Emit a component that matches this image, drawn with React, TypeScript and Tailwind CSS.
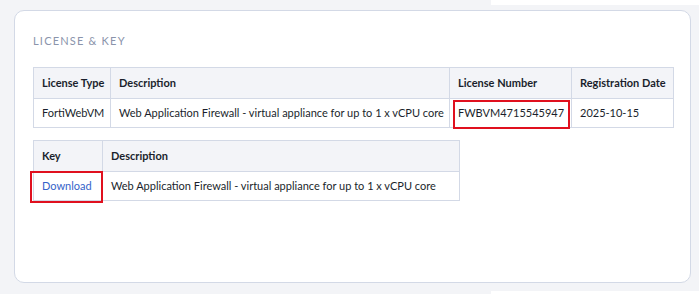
import React from "react";

const font = { fontFamily: "Lato, 'Noto Sans', sans-serif" };

export default function App() {
  return (
    <div className="w-[699px] h-[294px] bg-[#f3f4f7] flex flex-col overflow-hidden" style={font}>
      <div className="flex h-[5px] shrink-0">
        <div className="w-[491px] bg-[#f3f4f7]" />
        <div className="flex-1 bg-white" />
      </div>
      <div className="flex-1 pl-[14px] pr-[8px] pt-[5px] pb-[8px]">
        <div className="h-[273px] rounded-[10px] border border-[#d3d9e6] bg-white px-[18px] pt-[22px]">
          <div className="text-[11px] leading-[16px] tracking-[1.2px] text-[#8a94ab]">LICENSE &amp; KEY</div>
          <table className="mt-[18px] table-fixed w-[640px] border-collapse whitespace-nowrap text-[11px] text-[#1a1f2c]">
            <colgroup>
              <col className="w-[77px]" />
              <col className="w-[339px]" />
              <col className="w-[122px]" />
              <col className="w-[102px]" />
            </colgroup>
            <thead>
              <tr className="bg-[#f3f4f8]">
                <th className="h-[31px] border border-[#d3d9e6] px-[8px] text-left font-bold">License Type</th>
                <th className="h-[31px] border border-[#d3d9e6] px-[8px] text-left font-bold">Description</th>
                <th className="h-[31px] border border-[#d3d9e6] px-[8px] text-left font-bold">License Number</th>
                <th className="h-[31px] border border-[#d3d9e6] px-[8px] text-left font-bold">Registration Date</th>
              </tr>
            </thead>
            <tbody>
              <tr>
                <td className="h-[29px] border border-[#d3d9e6] px-[8px]">FortiWebVM</td>
                <td className="h-[29px] border border-[#d3d9e6] px-[8px]">Web Application Firewall - virtual appliance for up to 1 x vCPU core</td>
                <td className="relative h-[29px] border border-[#d3d9e6] px-[8px]">
                  FWBVM4715545947
                  <span className="absolute left-[3px] right-[1px] top-[1px] bottom-[-2px] border-2 border-[#e0101e]" />
                </td>
                <td className="h-[29px] border border-[#d3d9e6] px-[8px]">2025-10-15</td>
              </tr>
            </tbody>
          </table>
          <table className="mt-[12px] table-fixed w-[426px] border-collapse whitespace-nowrap text-[11px] text-[#1a1f2c]">
            <colgroup>
              <col className="w-[69px]" />
              <col className="w-[357px]" />
            </colgroup>
            <thead>
              <tr className="bg-[#f3f4f8]">
                <th className="h-[31px] border border-[#d3d9e6] px-[8px] text-left font-bold">Key</th>
                <th className="h-[31px] border border-[#d3d9e6] px-[8px] text-left font-bold">Description</th>
              </tr>
            </thead>
            <tbody>
              <tr>
                <td className="relative h-[29px] border border-[#d3d9e6] px-[8px] text-[#3563c9]">
                  Download
                  <span className="absolute left-[-4px] right-[-1px] top-[-1px] bottom-[-3px] border-2 border-[#e0101e]" />
                </td>
                <td className="h-[29px] border border-[#d3d9e6] px-[8px]">Web Application Firewall - virtual appliance for up to 1 x vCPU core</td>
              </tr>
            </tbody>
          </table>
        </div>
      </div>
      <div className="flex h-[3px] shrink-0">
        <div className="w-[491px] bg-[#f3f4f7]" />
        <div className="flex-1 bg-white" />
      </div>
    </div>
  );
}
